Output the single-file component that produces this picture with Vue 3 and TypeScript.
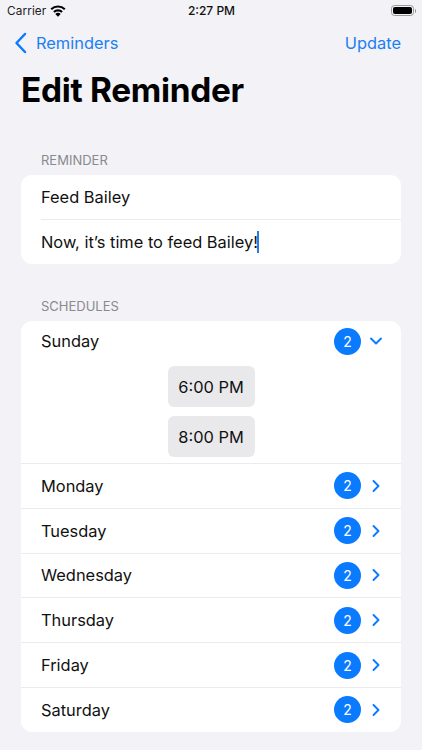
<script setup lang="ts">
const days: string[] = ['Monday', 'Tuesday', 'Wednesday', 'Thursday', 'Friday', 'Saturday']
const times: string[] = ['6:00 PM', '8:00 PM']
</script>

<template>
  <div class="screen">
    <div class="status">
      <div class="status-left">
        <span class="carrier">Carrier</span>
        <svg class="wifi" width="16" height="12" viewBox="0 0 16 12">
          <path d="M1.200 4.300C5 .6 11 .6 14.800 4.300" fill="none" stroke="#000" stroke-width="2.100"/>
          <path d="M3.900 7C6.200 4.800 9.800 4.800 12.100 7" fill="none" stroke="#000" stroke-width="2.100"/>
          <path d="M5.300 8.900C6.800 7.500 9.200 7.500 10.700 8.900L8 11.700z" fill="#000"/>
        </svg>
      </div>
      <span class="clock">2:27 PM</span>
      <div class="battery"><span class="battery-fill"></span><span class="battery-cap"></span></div>
    </div>

    <div class="nav">
      <div class="back">
        <svg width="13" height="22" viewBox="0 0 13 22">
          <path d="M11 2 2.500 11 11 20" fill="none" stroke="#0a7aff" stroke-width="2.500" stroke-linecap="round" stroke-linejoin="round"/>
        </svg>
        <span>Reminders</span>
      </div>
      <span class="update">Update</span>
    </div>

    <h1 class="title">Edit Reminder</h1>

    <div class="section-label first">REMINDER</div>
    <div class="card">
      <div class="field">Feed Bailey</div>
      <div class="field with-line">Now, it’s time to feed Bailey!<span class="caret"></span></div>
    </div>

    <div class="section-label second">SCHEDULES</div>
    <div class="card">
      <div class="row open">
        <span>Sunday</span>
        <div class="row-end">
          <span class="badge">2</span>
          <svg class="chev" width="14" height="14" viewBox="0 0 14 14">
            <path d="M2 4.500 7 9.500 12 4.500" fill="none" stroke="#0a7aff" stroke-width="1.900" stroke-linecap="round" stroke-linejoin="round"/>
          </svg>
        </div>
      </div>
      <div class="times">
        <div v-for="t in times" :key="t" class="time">{{ t }}</div>
      </div>
      <div v-for="d in days" :key="d" class="row with-line">
        <span>{{ d }}</span>
        <div class="row-end">
          <span class="badge">2</span>
          <svg class="chev" width="14" height="14" viewBox="0 0 14 14">
            <path d="M4.500 2 9.500 7 4.500 12" fill="none" stroke="#0a7aff" stroke-width="1.900" stroke-linecap="round" stroke-linejoin="round"/>
          </svg>
        </div>
      </div>
    </div>
  </div>
</template>

<style>
html, body { margin: 0; background: #f2f2f7; }
</style>

<style scoped>
.screen {
  width: 422px;
  height: 750px;
  overflow: hidden;
  background: #f2f2f7;
  font-family: Inter, "Liberation Sans", sans-serif;
  color: #111;
  box-sizing: border-box;
}
.status {
  height: 21px;
  display: grid;
  grid-template-columns: 1fr auto 1fr;
  align-items: center;
  padding: 0 6px 0 7px;
  font-size: 11.800px;
}
.status-left { display: flex; align-items: center; gap: 4px; }
.carrier { color: #222; letter-spacing: .1px; }
.clock { font-weight: 500; font-size: 12px; }
.battery { justify-self: end; display: flex; align-items: center; position: relative; width: 23px; height: 11px; box-sizing: border-box; border: 1px solid #9a9a9e; border-radius: 3.500px; padding: 1px; margin-right: 2px; }
.battery-fill { display: block; width: 100%; height: 100%; background: #000; border-radius: 2px; }
.battery-cap { position: absolute; right: -3px; top: 2.500px; width: 1.500px; height: 4px; background: #9a9a9e; border-radius: 0 1px 1px 0; }
.nav {
  height: 44px;
  display: flex;
  align-items: center;
  justify-content: space-between;
  padding: 0 21px 0 14px;
  font-size: 16.400px;
  color: #1c80f0;
}
.back { display: flex; align-items: center; gap: 9px; }
.title {
  margin: 0;
  padding: 5px 21px 0;
  font-size: 33.400px;
  line-height: 41px;
  font-weight: 700;
  letter-spacing: -.3px;
  color: #000;
}
.section-label {
  padding: 0 41px;
  font-size: 13px;
  line-height: 16px;
  color: #8a8a8e;
}
.first { margin-top: 41px; margin-bottom: 7px; }
.second { margin-top: 34px; margin-bottom: 7px; }
.card {
  margin: 0 21px;
  background: #fff;
  border-radius: 11px;
  overflow: hidden;
  font-size: 16.400px;
}
.field {
  height: 44px;
  display: flex;
  align-items: center;
  margin-left: 20px;
  box-sizing: border-box;
}
.with-line { border-top: 1px solid #ebebee; }
.field.with-line { height: 45px; }
.caret { display: inline-block; flex: none; width: 2px; height: 22px; background: #2a7ae6; margin-left: -.5px; }
.row {
  height: 44.800px;
  box-sizing: border-box;
  display: flex;
  align-items: center;
  justify-content: space-between;
  margin-left: 20px;
  padding-right: 18px;
}
.row.open { height: 40px; margin-bottom: 5px; }
.row.with-line { margin-left: 0; padding-left: 20px; }
.row-end { display: flex; align-items: center; gap: 8px; }
.badge {
  width: 27px;
  height: 27px;
  border-radius: 50%;
  background: #0a7aff;
  color: #fff;
  font-size: 14px;
  display: flex;
  align-items: center;
  justify-content: center;
}
.times {
  display: flex;
  flex-direction: column;
  align-items: center;
  gap: 9px;
  padding-bottom: 6px;
}
.time {
  width: 87px;
  height: 41px;
  display: flex;
  align-items: center;
  justify-content: center;
  background: #e9e9eb;
  border-radius: 6px;
  font-size: 16.400px;
}
</style>
